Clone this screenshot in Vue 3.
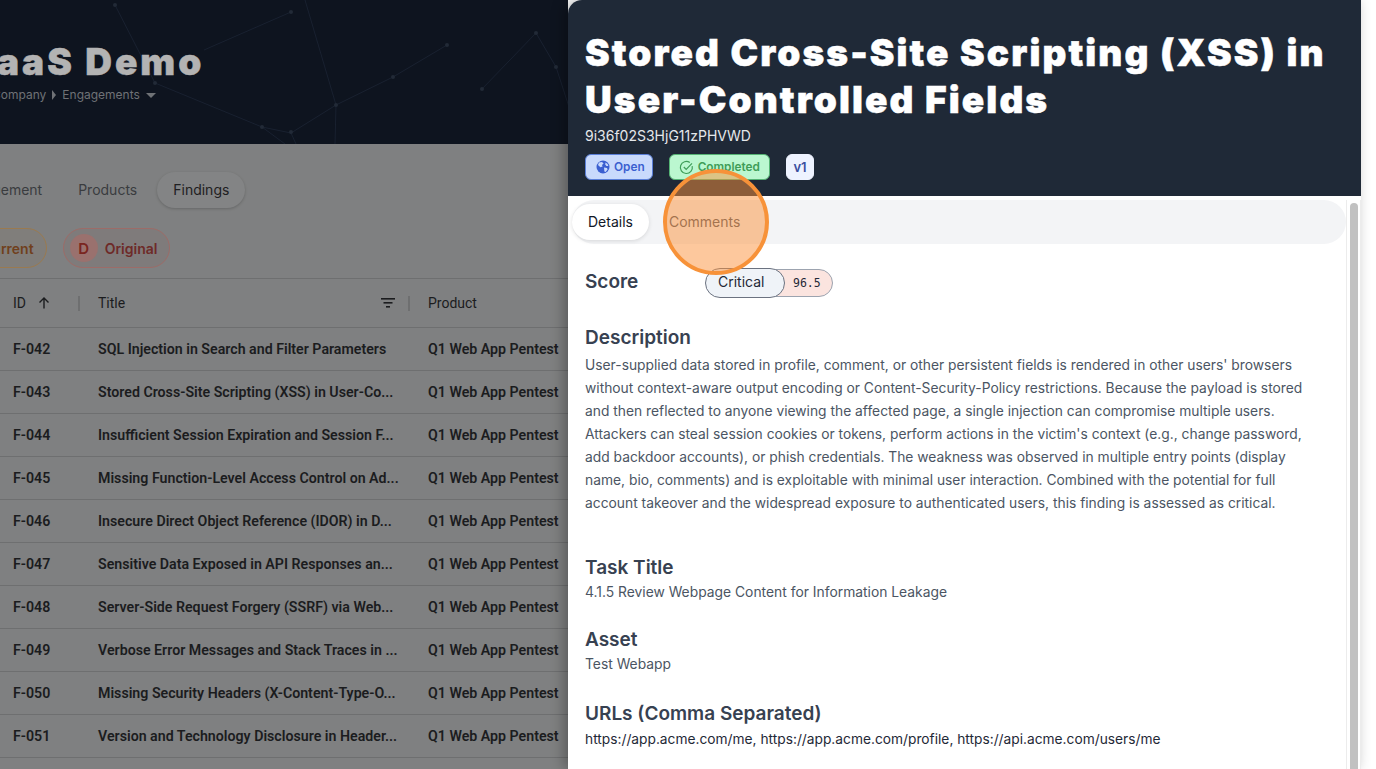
<template>
  <div class="screen">
    <!-- dimmed page behind the drawer -->
    <div class="backdrop">
      <header class="hero">
        <svg class="hero-net" width="568" height="144" viewBox="0 0 568 144" fill="none">
          <g stroke="#192130" stroke-width="1">
            <path d="M204 50L291 12M305 0L336 105L335 144M393 77L336 105L291 133L262 127L155 83L115 5" />
            <path d="M536 33L482 89M536 33L556 67L570 110M447 45L393 77M262 127L285 144M291 133L296 144" />
          </g>
          <g fill="#222a37">
            <circle cx="291" cy="12" r="2" /><circle cx="336" cy="105" r="2" /><circle cx="393" cy="77" r="2" />
            <circle cx="262" cy="127" r="2" /><circle cx="291" cy="132" r="2" /><circle cx="155" cy="83" r="2" />
            <circle cx="536" cy="33" r="2" /><circle cx="556" cy="67" r="2" /><circle cx="482" cy="89" r="2" />
            <circle cx="447" cy="45" r="2" /><circle cx="115" cy="5" r="2" />
          </g>
        </svg>
        <h1 class="hero-title">PTaaS Demo</h1>
        <div class="crumbs">
          <span>Company</span>
          <i class="caret-right"></i>
          <span>Engagements</span>
          <i class="caret-down"></i>
        </div>
      </header>

      <nav class="page-tabs">
        <span class="page-tab">Engagement</span>
        <span class="page-tab">Products</span>
        <span class="page-tab active">Findings</span>
      </nav>

      <div class="chips">
        <span class="chip chip-current">Current</span>
        <span class="chip chip-original"><b>D</b>Original</span>
      </div>

      <div class="row head">
        <div class="cell">
          <span class="head-label">ID
            <svg width="14" height="14" viewBox="0 0 14 14" fill="none" stroke="#1b1c1e" stroke-width="1.4">
              <path d="M7 12.5V2M2.5 6.5L7 2l4.5 4.5" />
            </svg>
          </span>
          <i class="sep"></i>
        </div>
        <div class="cell">
          <span>Title</span>
          <span class="head-tools">
            <svg width="16" height="12" viewBox="0 0 16 12" fill="#1b1c1e">
              <rect x="1" y="1" width="14" height="1.6" /><rect x="3.5" y="5" width="9" height="1.6" /><rect x="6" y="9" width="4" height="1.6" />
            </svg>
            <i class="sep"></i>
          </span>
        </div>
        <div class="cell">Product</div>
      </div>
      <div v-for="f in findings" :key="f.id" class="row">
        <div class="cell strong">{{ f.id }}</div>
        <div class="cell strong">{{ f.title }}</div>
        <div class="cell strong">Q1 Web App Pentest</div>
      </div>
    </div>

    <!-- finding drawer -->
    <aside class="drawer">
      <div class="drawer-head">
        <h2 class="drawer-title">Stored Cross-Site Scripting (XSS) in<br>User-Controlled Fields</h2>
        <div class="drawer-id">9i36f02S3HjG11zPHVWD</div>
        <div class="badges">
          <span class="badge badge-open">
            <svg width="14" height="14" viewBox="0 0 14 14">
              <circle cx="7" cy="7" r="6.5" fill="#3b5fd0" />
              <path d="M3 2.6L6 2l1.6 1.4L6 5 6.6 6.4 4.4 7.2 2 5zM8 7.6l3 .4.6 1.6-2 2.4-1.2-.4zM9.6 2.4l2 1.6.8 2-2 0-1.2-1.6z" fill="#c9dafc" />
            </svg>
            Open
          </span>
          <span class="badge badge-done">
            <svg width="15" height="15" viewBox="0 0 15 15" fill="none" stroke="#3f9d58" stroke-width="1.2">
              <path d="M13.2 6.2a6 6 0 1 1-2.4-3.6" />
              <path d="M4.8 7l2.4 2.4L13 3.4" />
            </svg>
            Completed
          </span>
          <span class="badge badge-ver">v1</span>
        </div>
      </div>

      <div class="drawer-body">
        <div class="drawer-main">
          <div class="drawer-tabs">
            <span class="drawer-tab active">Details</span>
            <span class="drawer-tab">Comments</span>
          </div>

          <div class="content">
            <div class="score-row">
              <span class="score-label">Score</span>
              <span class="score-pill">
                <span class="score-name">Critical</span>
                <span class="score-num">96.5</span>
              </span>
            </div>

            <h3 class="field-title desc-title">Description</h3>
            <p class="desc">User-supplied data stored in profile, comment, or other persistent fields is rendered in other users' browsers without context-aware output encoding or Content-Security-Policy restrictions. Because the payload is stored and then reflected to anyone viewing the affected page, a single injection can compromise multiple users. Attackers can steal session cookies or tokens, perform actions in the victim's context (e.g., change password, add backdoor accounts), or phish credentials. The weakness was observed in multiple entry points (display name, bio, comments) and is exploitable with minimal user interaction. Combined with the potential for full account takeover and the widespread exposure to authenticated users, this finding is assessed as critical.</p>

            <h3 class="field-title task">Task Title</h3>
            <div class="field-value">4.1.5 Review Webpage Content for Information Leakage</div>

            <h3 class="field-title asset">Asset</h3>
            <div class="field-value">Test Webapp</div>

            <h3 class="field-title urls">URLs (Comma Separated)</h3>
            <div class="field-value dark">https://app.acme.com/me, https://app.acme.com/profile, https://api.acme.com/users/me</div>
          </div>
        </div>

        <div class="scrollbar"><div class="thumb"></div></div>
      </div>
    </aside>

    <div class="page-gutter"></div>

    <!-- click highlight of the walkthrough -->
    <div class="spotlight"></div>
  </div>
</template>

<script setup>
const findings = [
  { id: 'F-042', title: 'SQL Injection in Search and Filter Parameters' },
  { id: 'F-043', title: 'Stored Cross-Site Scripting (XSS) in User-Co...' },
  { id: 'F-044', title: 'Insufficient Session Expiration and Session F...' },
  { id: 'F-045', title: 'Missing Function-Level Access Control on Ad...' },
  { id: 'F-046', title: 'Insecure Direct Object Reference (IDOR) in D...' },
  { id: 'F-047', title: 'Sensitive Data Exposed in API Responses an...' },
  { id: 'F-048', title: 'Server-Side Request Forgery (SSRF) via Web...' },
  { id: 'F-049', title: 'Verbose Error Messages and Stack Traces in ...' },
  { id: 'F-050', title: 'Missing Security Headers (X-Content-Type-O...' },
  { id: 'F-051', title: 'Version and Technology Disclosure in Header...' },
];
</script>

<style>
html, body { margin: 0; background: #fff; overflow: hidden; }
</style>

<style scoped>
.screen {
  position: relative;
  display: flex;
  width: 1376px;
  height: 769px;
  overflow: hidden;
  font-family: Inter, "Liberation Sans", sans-serif;
}

/* backdrop */
.backdrop {
  width: 568px;
  flex: none;
  overflow: hidden;
  background: #7f8081;
  font-family: Roboto, "Liberation Sans", sans-serif;
}
.hero {
  position: relative;
  height: 144px;
  box-sizing: border-box;
  padding-top: 39px;
  background: #0e141f;
}
.hero-net { position: absolute; left: 0; top: 0; }
.hero-title {
  position: relative;
  margin: 0 0 0 -56px;
  font: 900 37px/46px Inter, sans-serif;
  letter-spacing: 3px;
  -webkit-text-stroke: 0.5px #b3b3b3;
  color: #b3b3b3;
  white-space: nowrap;
}
.crumbs {
  position: relative;
  display: flex;
  align-items: center;
  gap: 6px;
  margin: 2px 0 0 -8px;
  font-family: Inter, sans-serif;
  font-size: 12px;
  line-height: 16px;
  color: #6f7276;
}
.caret-right { border-left: 4px solid #6f7276; border-top: 5px solid transparent; border-bottom: 5px solid transparent; }
.caret-down { border-top: 5px solid #6f7276; border-left: 5px solid transparent; border-right: 5px solid transparent; }

.page-tabs {
  display: flex;
  align-items: flex-start;
  height: 68px;
  box-sizing: border-box;
  padding-top: 28px;
  margin-left: -57px;
  gap: 4px;
  font-family: Inter, sans-serif;
  font-size: 14px;
  line-height: 16px;
  color: #3a3c3f;
}
.page-tab { padding: 10px 16px; border-radius: 18px; }
.page-tab.active {
  background: #838485;
  color: #1f2022;
  box-shadow: 0 1px 3px rgba(0, 0, 0, 0.2);
}

.chips {
  display: flex;
  align-items: flex-start;
  gap: 16px;
  height: 67px;
  box-sizing: border-box;
  padding-top: 16px;
  margin-left: -45px;
  border-bottom: 1px solid #6e6f70;
  font-family: Inter, sans-serif;
  font-size: 14px;
  font-weight: 600;
}
.chip {
  display: flex;
  align-items: center;
  gap: 7px;
  height: 40px;
  box-sizing: border-box;
  padding: 0 12px 0 6px;
  border-radius: 20px;
  border: 1px solid;
}
.chip-current { padding-left: 26px; color: #70401c; border-color: #9a7a50; background: #807e7b; }
.chip-original { color: #6e2a28; border-color: #9c6c68; background: #7f7b7b; }
.chip-original b {
  display: flex;
  align-items: center;
  justify-content: center;
  width: 28px;
  height: 28px;
  border-radius: 50%;
  background: #9a716e;
  color: #7a2520;
  font-size: 15px;
  font-weight: 600;
}

.row {
  display: grid;
  grid-template-columns: 67px 312px 1fr;
  gap: 18px;
  align-items: center;
  height: 43px;
  box-sizing: border-box;
  padding-left: 13px;
  border-bottom: 1px solid #6e6f70;
  font-size: 14.2px;
  color: #1b1c1e;
  white-space: nowrap;
}
.row.head { height: 49px; font-size: 14px; }
.cell { display: flex; align-items: center; justify-content: space-between; min-width: 0; }
.strong { font-weight: 600; }
.head-label { display: flex; align-items: center; gap: 11px; }
.head-tools { display: flex; align-items: center; gap: 12px; }
.sep { width: 2px; height: 15px; background: #6e6f70; }

/* drawer */
.drawer {
  width: 793px;
  flex: none;
  display: flex;
  flex-direction: column;
  height: 769px;
  overflow: hidden;
  background: #fff;
  border-top-left-radius: 14px;
  box-shadow: -4px 0 14px rgba(0, 0, 0, 0.3);
  z-index: 1;
}
.page-gutter { flex: 1; background: #fff; }
.drawer-head {
  height: 196px;
  box-sizing: border-box;
  padding: 29px 16px 0 17px;
  background: #1f2937;
  color: #fff;
}
.drawer-title {
  margin: 0;
  font: 900 37px/47px Inter, sans-serif;
  letter-spacing: 2.1px;
  -webkit-text-stroke: 0.5px #fff;
  white-space: nowrap;
}
.drawer-id { margin-top: 3px; font-size: 14px; line-height: 20px; color: #e5e7eb; }
.badges { display: flex; align-items: center; gap: 16px; margin-top: 8px; }
.badge {
  display: flex;
  align-items: center;
  gap: 4px;
  height: 26px;
  box-sizing: border-box;
  padding: 0 7px 0 10px;
  border-radius: 6px;
  border: 1px solid;
  font-size: 11.8px;
  font-weight: 600;
}
.badge-open { color: #3b5fd0; background: #c9dafc; border-color: #5a7fd8; }
.badge-done { color: #3f9d58; background: #bbf7d0; border-color: #55b374; padding: 0 9px 0 9px; }
.badge-ver { padding: 0 6.5px; color: #3b4fa0; background: #eef3ff; border-color: #eef3ff; font-size: 13px; }

.drawer-body { flex: 1; display: flex; min-height: 0; }
.drawer-main { flex: 1; min-width: 0; }
.drawer-tabs {
  display: flex;
  align-items: center;
  gap: 4px;
  height: 44px;
  margin: 4px 0 0 4px;
  padding: 0;
  border-radius: 22px;
  background: #f3f4f6;
  font-size: 14px;
  color: #4b5563;
}
.drawer-tab { padding: 9px 16px; line-height: 18px; border-radius: 18px; }
.drawer-tab.active {
  background: #fff;
  color: #111827;
  box-shadow: 0 1px 4px rgba(0, 0, 0, 0.12);
}

.content { padding: 24px 34px 0 17px; }
.score-row { display: flex; align-items: center; height: 30px; }
.score-label { width: 120px; padding-bottom: 2px; font-size: 19px; line-height: 26px; font-weight: 600; color: #374151; }
.score-pill { display: flex; align-items: center; }
.score-name {
  width: 80px;
  height: 30px;
  box-sizing: border-box;
  padding-left: 12px;
  line-height: 26px;
  font-size: 14px;
  color: #1f2937;
  background: #eff3f8;
  border: 1px solid #6b7280;
  border-radius: 15px;
  position: relative;
  z-index: 1;
}
.score-num {
  width: 58px;
  height: 28px;
  box-sizing: border-box;
  margin-left: -10px;
  padding-left: 17px;
  font: 11.5px/26px "DejaVu Sans Mono", monospace;
  color: #1f2937;
  background: #fbe4df;
  border: 1px solid #9ca3af;
  border-radius: 0 14px 14px 0;
}
.field-title { margin: 0; font-size: 19px; line-height: 24px; font-weight: 600; color: #374151; }
.content > .desc-title { margin-top: 28px; }
.content > .task { margin-top: 41px; }
.content > .asset { margin-top: 25px; }
.content > .urls { margin-top: 27px; }
.desc { margin: 4px 0 0; font-size: 13.82px; line-height: 23px; color: #4b5563; }
.field-value { margin-top: 1px; font-size: 13.85px; line-height: 22px; color: #4b5563; }
.field-value.dark { margin-top: 2px; font-size: 13.75px; color: #1f2937; white-space: nowrap; }

.scrollbar {
  width: 15px;
  flex: none;
  padding: 3px 2px 0 3px;
  box-sizing: border-box;
  margin-top: 4px;
  border-left: 1px solid #ececec;
  border-right: 1px solid #ececec;
}
.thumb { width: 8px; height: 100%; background: #c1c1c1; border-radius: 4px 4px 0 0; }

.spotlight {
  position: absolute;
  left: 663px;
  top: 169px;
  width: 106px;
  height: 106px;
  box-sizing: border-box;
  border: 4px solid #f79239;
  border-radius: 50%;
  background: rgba(251, 146, 60, 0.5);
  z-index: 2;
}
</style>
